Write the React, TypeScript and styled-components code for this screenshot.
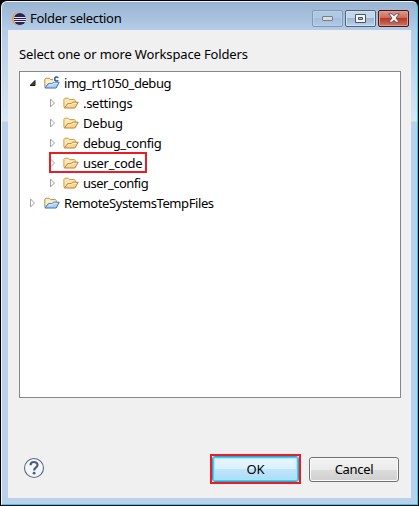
import React from "react";
import styled, { createGlobalStyle } from "styled-components";

const Global = createGlobalStyle`
  *, *::before, *::after { box-sizing: border-box; }
  body { margin: 0; background: #000; overflow: hidden; }
  button { padding: 0; font: inherit; color: inherit; }
  svg { display: block; flex: none; }
`;

const Window = styled.div`
  margin-left: 1px;
  margin-top: 1px;
  width: 417px;
  height: 504px;
  padding: 0 6px 6px;
  display: flex;
  flex-direction: column;
  border: 1px solid #eef5fc;
  border-right-color: #24d3f2;
  border-bottom-color: #24d3f2;
  border-radius: 6px 6px 0 0;
  background: linear-gradient(#99b4d1 0, #b3cce7 28px, #d9e7f5 119px, #b9d1ea 120px);
  font-family: "Noto Sans", sans-serif;
  font-size: 13px;
  color: #000;
`;

const TitleBar = styled.header`
  height: 28px;
  flex: none;
  display: flex;
  align-items: center;
  padding: 5px 2px 0 4px;
`;

const Fit = styled.span<{ $spacing?: number }>`
  white-space: pre;
  letter-spacing: ${(p) => p.$spacing ?? 0}px;
`;

const Title = styled.div`
  margin-left: 3px;
  flex: 1;
  line-height: 18px;
  margin-top: -1px;
`;

const Controls = styled.div`
  display: flex;
  gap: 2px;
  margin-top: -1px;
`;

const ControlButton = styled.button<{ $kind: "min" | "max" | "close" }>`
  width: 31px;
  height: 17px;
  display: flex;
  align-items: center;
  justify-content: center;
  border-radius: 2px;
  border: 1px solid
    ${(p) => ({ min: "#8199b9", max: "#52637c", close: "#4a1420" })[p.$kind]};
  box-shadow: inset 0 0 0 1px
    ${(p) => ({ min: "#b8cfe8", max: "#d0e0f0", close: "#df9a8d" })[p.$kind]};
  background: ${(p) =>
    ({
      min: "linear-gradient(#b0c8e3 50%, #a4bfdc 50%, #b1cae5)",
      max: "linear-gradient(#c3d7eb 50%, #9bb7d4 50%, #bcd3ea)",
      close: "linear-gradient(#dc9a8c 0, #ca6655 50%, #b93922 50%, #cf7560)",
    })[p.$kind]};
`;

const Client = styled.main`
  flex: 1;
  display: flex;
  flex-direction: column;
  background: #f0f0f0;
  padding: 15px 12px 14px 11px;
`;

const Prompt = styled.div`
  line-height: 18px;
  height: 26px;
`;

const Tree = styled.div`
  height: 327px;
  width: 382px;
  border: 1px solid #828790;
  background: #fff;
  padding: 1px 0 0 10px;
`;

const Row = styled.div<{ $depth: number }>`
  height: 20px;
  display: flex;
  align-items: center;
  padding-left: ${(p) => p.$depth * 20}px;
`;

const RowContent = styled.div<{ $marked?: boolean }>`
  position: relative;
  display: flex;
  align-items: center;
  height: 20px;
  ${(p) =>
    p.$marked &&
    `&::after { content: ""; position: absolute; left: -1px; top: -1px; width: 98px; height: 21px; border: 2px solid #ed1c24; }`}
`;

const Label = styled.div`
  margin-left: 4px;
  line-height: 20px;
`;

const IconSlot = styled.div<{ $depth: number }>`
  margin-left: ${(p) => (p.$depth ? 4 : 5)}px;
`;

const Footer = styled.footer`
  margin-top: 56px;
  height: 30px;
  display: flex;
  align-items: center;
`;

const HelpButton = styled.button`
  border: 0;
  background: none;
  margin: -2px auto 0 4px;
`;

const DefaultMark = styled.div`
  width: 91px;
  height: 30px;
  border: 2px solid #ed1c24;
  margin-right: 8px;
  display: flex;
`;

const ActionButton = styled.button<{ $primary?: boolean }>`
  width: ${(p) => (p.$primary ? 87 : 90)}px;
  height: ${(p) => (p.$primary ? 26 : 25)}px;
  border-radius: 3px;
  border: 1px solid ${(p) => (p.$primary ? "#3ca1ca" : "#707070")};
  box-shadow: ${(p) =>
    p.$primary
      ? "inset 0 0 0 1px #31d5fb, inset 0 0 1px 2px #a5e8fa"
      : "inset 0 0 0 1px #fbfbfb"};
  background: ${(p) =>
    p.$primary
      ? "linear-gradient(#eaf6fd 0, #d9f0fc 50%, #bee6fd 50%, #abdcf4)"
      : "linear-gradient(#f2f2f2 0, #ebebeb 50%, #dddddd 50%, #cfcfcf)"};
`;

function AppIcon() {
  return (
    <svg width="15" height="14" viewBox="0 0 15 14">
      <circle cx="6.4" cy="7" r="6.4" fill="#f7941e" />
      <circle cx="7.6" cy="7" r="6.4" fill="#b9cbe0" />
      <circle cx="7.9" cy="7" r="6.1" fill="#2c2255" />
      <path d="M2.2 5.5h11.6M1.9 7.5h12.1M2.3 9.5h11.4" stroke="#e5e2f1" strokeWidth="1" />
    </svg>
  );
}

function Expander({ open }: { open?: boolean }) {
  return (
    <svg width="9" height="12" viewBox="0 0 9 12">
      {open ? (
        <path d="M5 3.5V8.5H0z" fill="#404040" stroke="#1c1c1c" strokeWidth="1" />
      ) : (
        <path d="M.5 2L4.5 6L.5 10z" fill="#fff" stroke="#a0a0a0" strokeWidth="1" />
      )}
    </svg>
  );
}

function FolderIcon() {
  return (
    <svg width="16" height="14" viewBox="0 0 16 14">
      <path d="M.9 11.2V3.3L2 2.2h3.4L6.6 3.6h4.9l.8 1V8" fill="#fbe8b5" stroke="#d09a4c" />
      <path d="M1.3 12L4.6 7.7H8l1.5-1.5h5.7L11.9 12z" fill="#fbd58b" stroke="#b97f35" strokeLinejoin="round" />
      <path d="M5 8.8h3.5l1.4-1.5h3.7" stroke="#fff2c9" fill="none" />
    </svg>
  );
}

function ProjectIcon({ c }: { c?: boolean }) {
  return (
    <svg width="16" height="14" viewBox="0 0 16 14">
      <path d="M.8 11.2V3.3L2 2.2h3.3l1.2 1.4h5l.8 1V8" fill="#fbeec0" stroke="#a99360" />
      <path d="M.9 12L4.3 7.7h3.6l1.5-1.5h5.8L12.2 12z" fill="#a9d0f8" stroke="#426eb8" strokeLinejoin="round" />
      <path d="M4.8 8.8h3.6l1.4-1.5h3.8" stroke="#e3f3ff" fill="none" />
      {c && (
        <>
          <path d="M9 0h7v5.7H9z" fill="#fff" />
          <path d="M14.3 1.7C12.7.4 10.7 1 10.7 3s2 2.6 3.6 1.3" fill="none" stroke="#2c5d96" strokeWidth="1.6" />
        </>
      )}
    </svg>
  );
}

type Item = { name: string; depth: number; spacing: number; open?: boolean; marked?: boolean };

const items: Item[] = [
  { name: "img_rt1050_debug", depth: 0, open: true, spacing: -0.45 },
  { name: ".settings", depth: 1, spacing: -0.3 },
  { name: "Debug", depth: 1, spacing: -0.2 },
  { name: "debug_config", depth: 1, spacing: -0.4 },
  { name: "user_code", depth: 1, marked: true, spacing: -0.33 },
  { name: "user_config", depth: 1, spacing: -0.5 },
  { name: "RemoteSystemsTempFiles", depth: 0, spacing: -0.41 },
];

export default function App() {
  return (
    <>
      <Global />
      <Window>
        <TitleBar>
          <AppIcon />
          <Title><Fit $spacing={-0.32}>Folder selection</Fit></Title>
          <Controls>
            <ControlButton $kind="min" aria-label="Minimize">
              <svg width="12" height="6" viewBox="0 0 12 6">
                <rect x=".5" y="1.5" width="10" height="4" rx=".5" fill="#dcdcdc" stroke="#777e8b" />
              </svg>
            </ControlButton>
            <ControlButton $kind="max" aria-label="Maximize">
              <svg width="11" height="9" viewBox="0 0 11 9">
                <path fillRule="evenodd" d="M.5.5h10v8H.5zM3.5 3.5h4v2h-4z" fill="#f5f5f5" stroke="#4c536b" />
              </svg>
            </ControlButton>
            <ControlButton $kind="close" aria-label="Close">
              <svg width="12" height="10" viewBox="0 0 12 10">
                <path d="M.7.8h3.5L6 2.8 7.8.8h3.5L8 5l3.3 4.2H7.8L6 7.2 4.2 9.2H.7L4 5z" fill="#f7f7f7" stroke="#574b59" strokeWidth=".9" />
              </svg>
            </ControlButton>
          </Controls>
        </TitleBar>
        <Client>
          <Prompt><Fit $spacing={-0.14}>Select one or more Workspace Folders</Fit></Prompt>
          <Tree>
            {items.map((item) => (
              <Row key={item.name} $depth={item.depth}>
                <RowContent $marked={item.marked}>
                  <Expander open={item.open} />
                  <IconSlot $depth={item.depth}>
                    {item.depth ? <FolderIcon /> : <ProjectIcon c={item.open} />}
                  </IconSlot>
                  <Label><Fit $spacing={item.spacing}>{item.name}</Fit></Label>
                </RowContent>
              </Row>
            ))}
          </Tree>
          <Footer>
            <HelpButton aria-label="Help">
              <svg width="22" height="22" viewBox="0 0 22 22">
                <circle cx="11" cy="11" r="9.5" fill="#f5f6f8" stroke="#5b6b86" strokeWidth="1.1" />
                <path d="M7.5 8.2C7.5 4 14.5 4 14.5 8c0 2.6-3.4 2.6-3.4 5.5" fill="none" stroke="#4d5d7d" strokeWidth="2.2" />
                <circle cx="11.1" cy="16.2" r="1.4" fill="#4d5d7d" />
              </svg>
            </HelpButton>
            <DefaultMark><ActionButton $primary><Fit $spacing={-0.2}>OK</Fit></ActionButton></DefaultMark>
            <ActionButton><Fit $spacing={-0.3}>Cancel</Fit></ActionButton>
          </Footer>
        </Client>
      </Window>
    </>
  );
}
